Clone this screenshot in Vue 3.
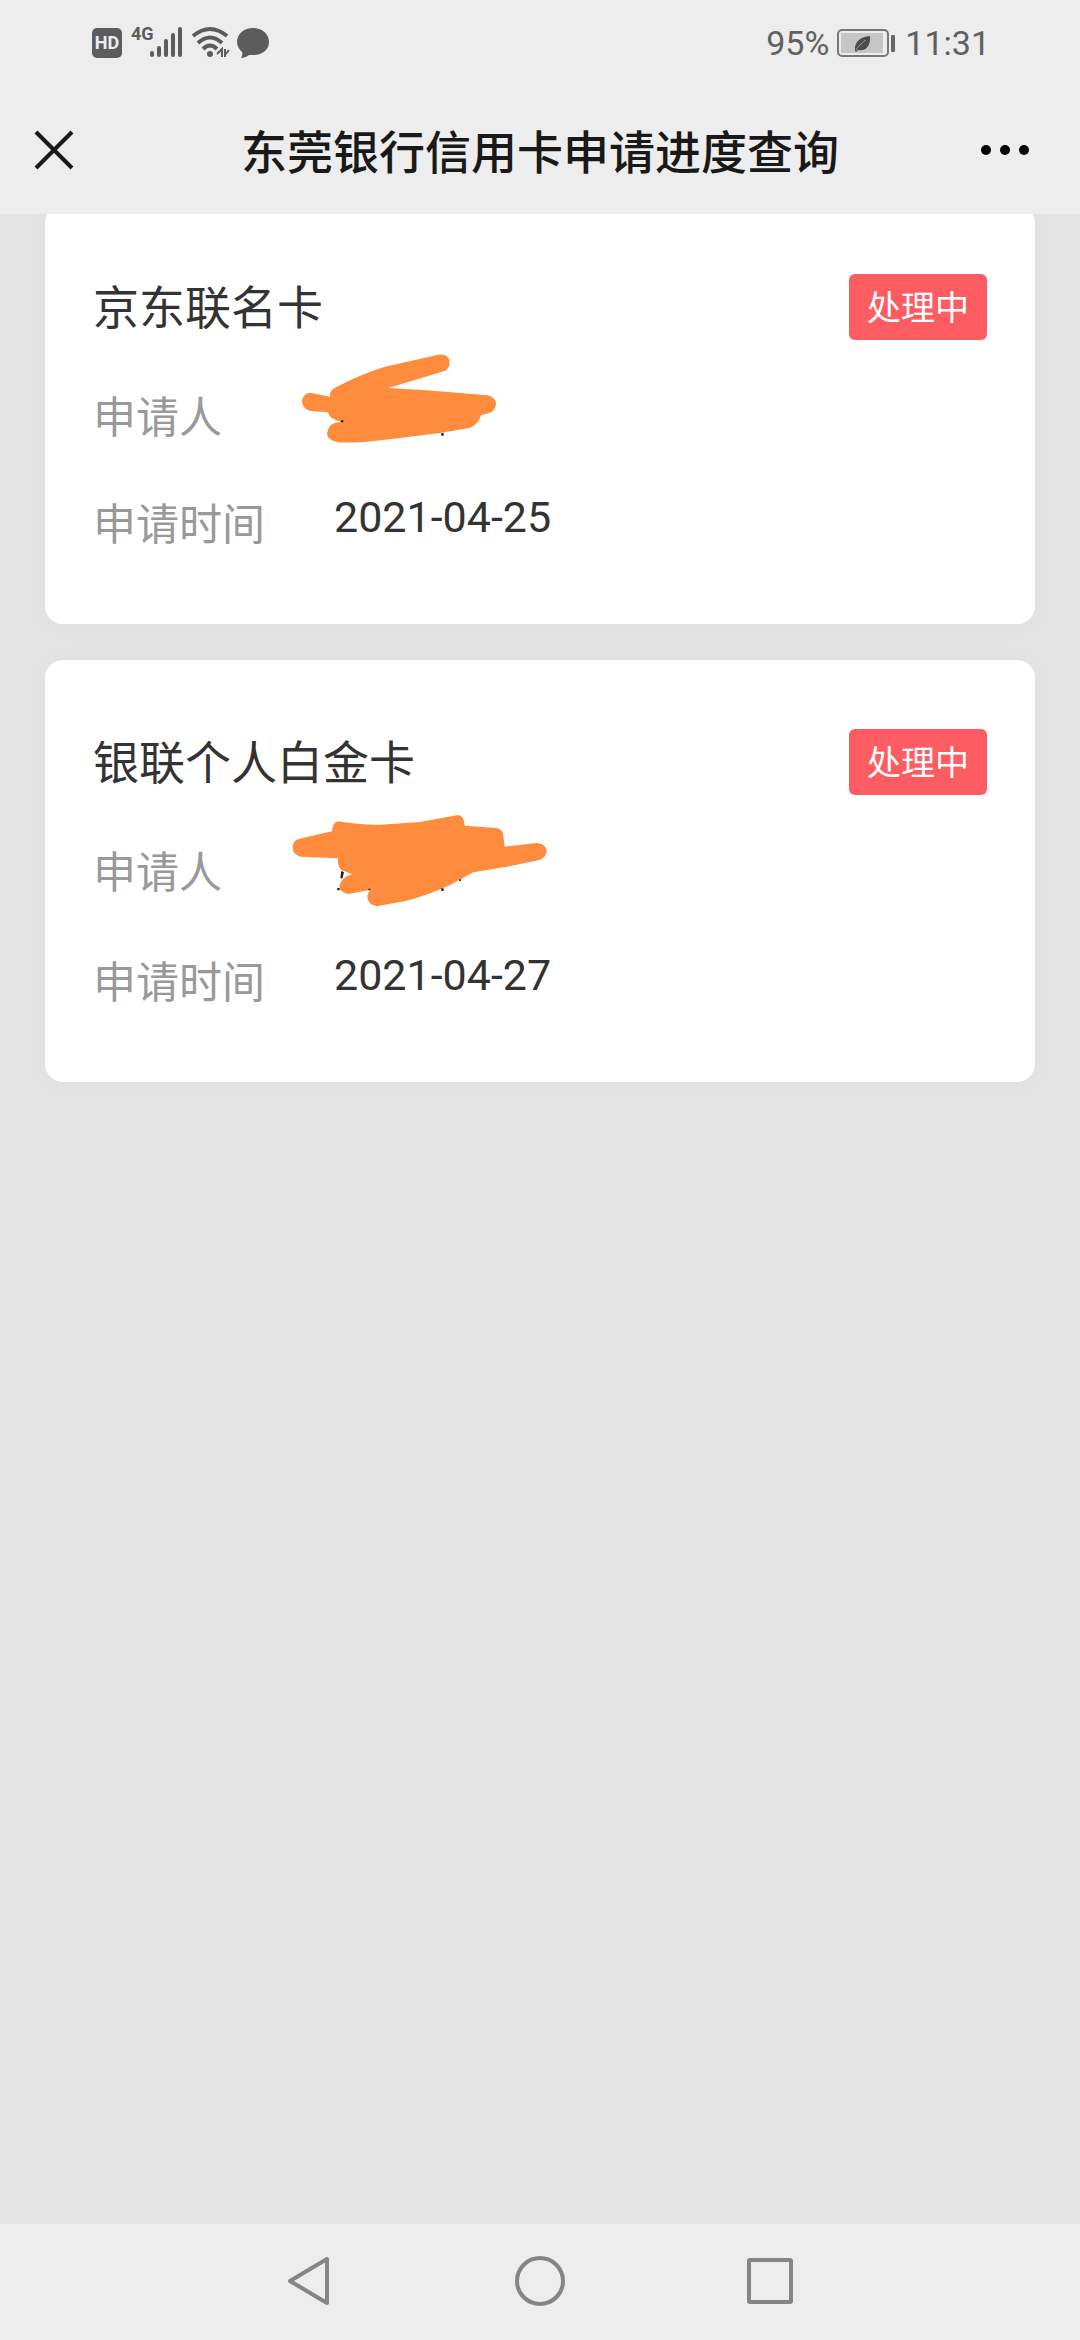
<script setup>
import { ref } from "vue";

const title = "东莞银行信用卡申请进度查询";

const cards = ref([
  {
    name: "京东联名卡",
    status: "处理中",
    date: "2021-04-25",
    height: 97,
    viewBox: "0 36 870 291",
    scribble:
      "M90 158 L150 170 Q148 152 165 143 Q240 103 315 80 L475 44 Q505 40 509 65 Q510 85 493 93 L325 144 L440 151 L622 166 Q648 172 648 192 Q645 215 625 220 L603 226 Q595 255 568 264 L480 279 L310 300 Q230 310 175 307 Q142 302 141 280 Q145 254 165 249 L183 245 Q150 240 144 217 L90 213 Q66 206 66 183 Q70 160 90 158 Z",
    specks: "M183 241h7v6h-7z M484 279h7v8h-7z",
  },
  {
    name: "银联个人白金卡",
    status: "处理中",
    date: "2021-04-27",
    height: 100,
    viewBox: "0 24 870 300",
    scribble:
      "M58 119 L156 97 Q158 68 176 67 Q235 78 300 77 L420 69 L535 48 Q554 52 554 80 L650 87 Q669 90 670 112 L674 143 L770 132 Q799 134 800 158 Q796 178 775 184 L680 203 L580 220 L510 258 Q440 290 380 305 L290 322 Q262 316 262 292 Q264 278 273 272 L205 285 Q178 280 178 262 Q186 232 216 226 L190 215 Q172 210 174 178 L62 173 Q38 168 38 144 Q40 122 58 119 Z",
    specks:
      "M184 216l8 3-5 20-6-2z M172 267h7v7h-7z M265 269h6v5h-6z M484 268h7v8h-7z M538 241h5v5h-5z",
  },
]);
</script>

<template>
  <div class="page">
    <header class="top">
      <div class="status-bar">
        <svg class="icons" viewBox="0 -8 180 50" aria-hidden="true">
          <!-- HD -->
          <rect x="0" y="2" width="30" height="30" rx="5" fill="#5c5c5c" />
          <text class="hd" x="15" y="23" text-anchor="middle">HD</text>
          <!-- 4G -->
          <text class="net" x="39" y="14">4G</text>
          <path
            d="M60 27v2M67 22v7M74 15v14M81 9v20M88 3v26"
            stroke="#5c5c5c"
            stroke-width="4"
            stroke-linecap="round"
          />
          <!-- wifi -->
          <g fill="none" stroke="#5c5c5c" stroke-width="4">
            <path d="M101 10Q118 -4 135 10" />
            <path d="M106 17Q118 6 130 17" />
            <path d="M111 23Q118 16 125 23" />
          </g>
          <circle cx="118" cy="28" r="3" fill="#5c5c5c" />
          <path
            d="M125 28l5-5v8M133 23v8M137 24l-4 5"
            fill="none"
            stroke="#5c5c5c"
            stroke-width="2"
          />
          <!-- chat -->
          <path
            d="M161 2c9 0 16 6 16 14s-7 13-16 13c-2 0-3 0-4 0-2 2-6 3-8 3 1-2 2-4 1-6-3-3-5-6-5-10 0-8 7-14 16-14z"
            fill="#5c5c5c"
          />
        </svg>
        <div class="status-right">
          <span>95%</span>
          <svg class="battery" viewBox="0 0 60 28" aria-hidden="true">
            <rect x="1" y="1" width="50" height="26" rx="4" fill="none" stroke="#777" stroke-width="2" />
            <rect x="4" y="4" width="42" height="20" fill="#c6c6c6" />
            <path d="M18 22c-1-9 5-14 15-15 1 9-4 16-12 14l-2 2z" fill="#4c4c4c" />
            <path d="M19 21c3-5 6-7 10-10" stroke="#999" stroke-width="1" fill="none" />
            <rect x="54" y="6" width="4" height="17" rx="1" fill="#666" />
          </svg>
          <span>11:31</span>
        </div>
      </div>
      <div class="nav-bar">
        <button type="button" aria-label="关闭">
          <svg viewBox="0 0 40 40" width="40" height="40">
            <path d="M2 2L38 38M38 2L2 38" stroke="#191919" stroke-width="4" />
          </svg>
        </button>
        <h1>{{ title }}</h1>
        <button class="more" type="button" aria-label="更多">
          <svg viewBox="0 0 50 40" width="50" height="40">
            <circle cx="6" cy="20" r="5" />
            <circle cx="25" cy="20" r="5" />
            <circle cx="44" cy="20" r="5" />
          </svg>
        </button>
      </div>
    </header>

    <main class="content">
      <section v-for="card in cards" :key="card.name" class="card">
        <div class="card-head">
          <h2>{{ card.name }}</h2>
          <span class="tag">{{ card.status }}</span>
        </div>
        <dl>
          <div class="row applicant">
            <dt>申请人</dt>
            <dd>
              <svg :viewBox="card.viewBox" width="290" :height="card.height">
                <path :d="card.scribble" fill="#ff8c3c" />
                <path :d="card.specks" fill="#2b1a0e" />
              </svg>
            </dd>
          </div>
          <div class="row time">
            <dt>申请时间</dt>
            <dd>{{ card.date }}</dd>
          </div>
        </dl>
      </section>
    </main>

    <nav class="system-nav">
      <button type="button" aria-label="返回">
        <svg viewBox="0 0 60 60" width="60" height="60">
          <path d="M10 29L47 7V51Z" />
        </svg>
      </button>
      <button type="button" aria-label="主屏幕">
        <svg viewBox="0 0 60 60" width="60" height="60">
          <circle cx="30" cy="29" r="23" />
        </svg>
      </button>
      <button type="button" aria-label="最近任务">
        <svg viewBox="0 0 60 60" width="60" height="60">
          <rect x="9" y="8" width="42" height="42" rx="1" />
        </svg>
      </button>
    </nav>
  </div>
</template>

<style>
body {
  margin: 0;
  background: #e4e4e4;
}
</style>

<style scoped>
.page {
  display: flex;
  flex-direction: column;
  min-height: 100vh;
  font-family: Roboto, "Noto Sans CJK SC", sans-serif;
  color: #333;
}

button {
  display: flex;
  padding: 0;
  border: none;
  background: none;
  cursor: pointer;
}

svg {
  display: block;
}

/* Header stays above the scrolled list */
.top {
  position: sticky;
  top: 0;
  z-index: 1;
  background: #ededed;
}

.status-bar {
  display: flex;
  justify-content: space-between;
  align-items: center;
  height: 86px;
  padding: 0 90px 0 92px;
}

.icons {
  width: 180px;
  height: 50px;
}

.hd {
  font-size: 18px;
  font-weight: 700;
  fill: #ededed;
}

.net {
  font-size: 18px;
  font-weight: 700;
  fill: #5c5c5c;
}

.status-right {
  display: flex;
  align-items: center;
  gap: 8px;
  font-size: 34px;
  line-height: 40px;
  color: #606060;
}

.battery {
  width: 60px;
  height: 28px;
}

.nav-bar {
  display: grid;
  grid-template-columns: 1fr auto 1fr;
  align-items: center;
  height: 128px;
  padding: 0 50px 0 34px;
}

.more {
  justify-self: end;
}

h1 {
  margin: 0;
  padding: 6px 0 0 16px;
  font-size: 46px;
  font-weight: 500;
  line-height: 64px;
  color: #191919;
}

.content {
  display: flex;
  flex-direction: column;
  flex: 1;
  gap: 36px;
  margin-top: -9px;
  padding: 0 45px 36px;
  background: #e4e4e4;
}

.card {
  padding: 69px 48px;
  border-radius: 18px;
  background: #fff;
  box-shadow: 0 0 24px rgba(0, 0, 0, 0.03);
}

.card-head {
  display: flex;
  justify-content: space-between;
  align-items: flex-start;
}

h2 {
  margin: 0;
  font-size: 46px;
  font-weight: 400;
  line-height: 68px;
}

.tag {
  padding: 2px 18px 0;
  border-radius: 6px;
  background: #fd5c63;
  color: #fff;
  font-size: 34px;
  line-height: 64px;
}

dl {
  margin: 10px 0 0;
}

.row {
  display: flex;
  align-items: flex-start;
  font-size: 43px;
}

.applicant dt {
  margin-top: 36px;
}

.time {
  margin-top: 46px;
}

dt {
  width: 187px;
  line-height: 60px;
  color: #999;
}

dd {
  margin: 0;
  line-height: 44px;
}

.time dd {
  padding-left: 54px;
}

.system-nav {
  display: flex;
  justify-content: center;
  align-items: center;
  gap: 170px;
  height: 116px;
  background: #ededed;
}

.system-nav svg {
  fill: none;
  stroke: #858585;
  stroke-width: 4;
  stroke-linejoin: round;
}
</style>
